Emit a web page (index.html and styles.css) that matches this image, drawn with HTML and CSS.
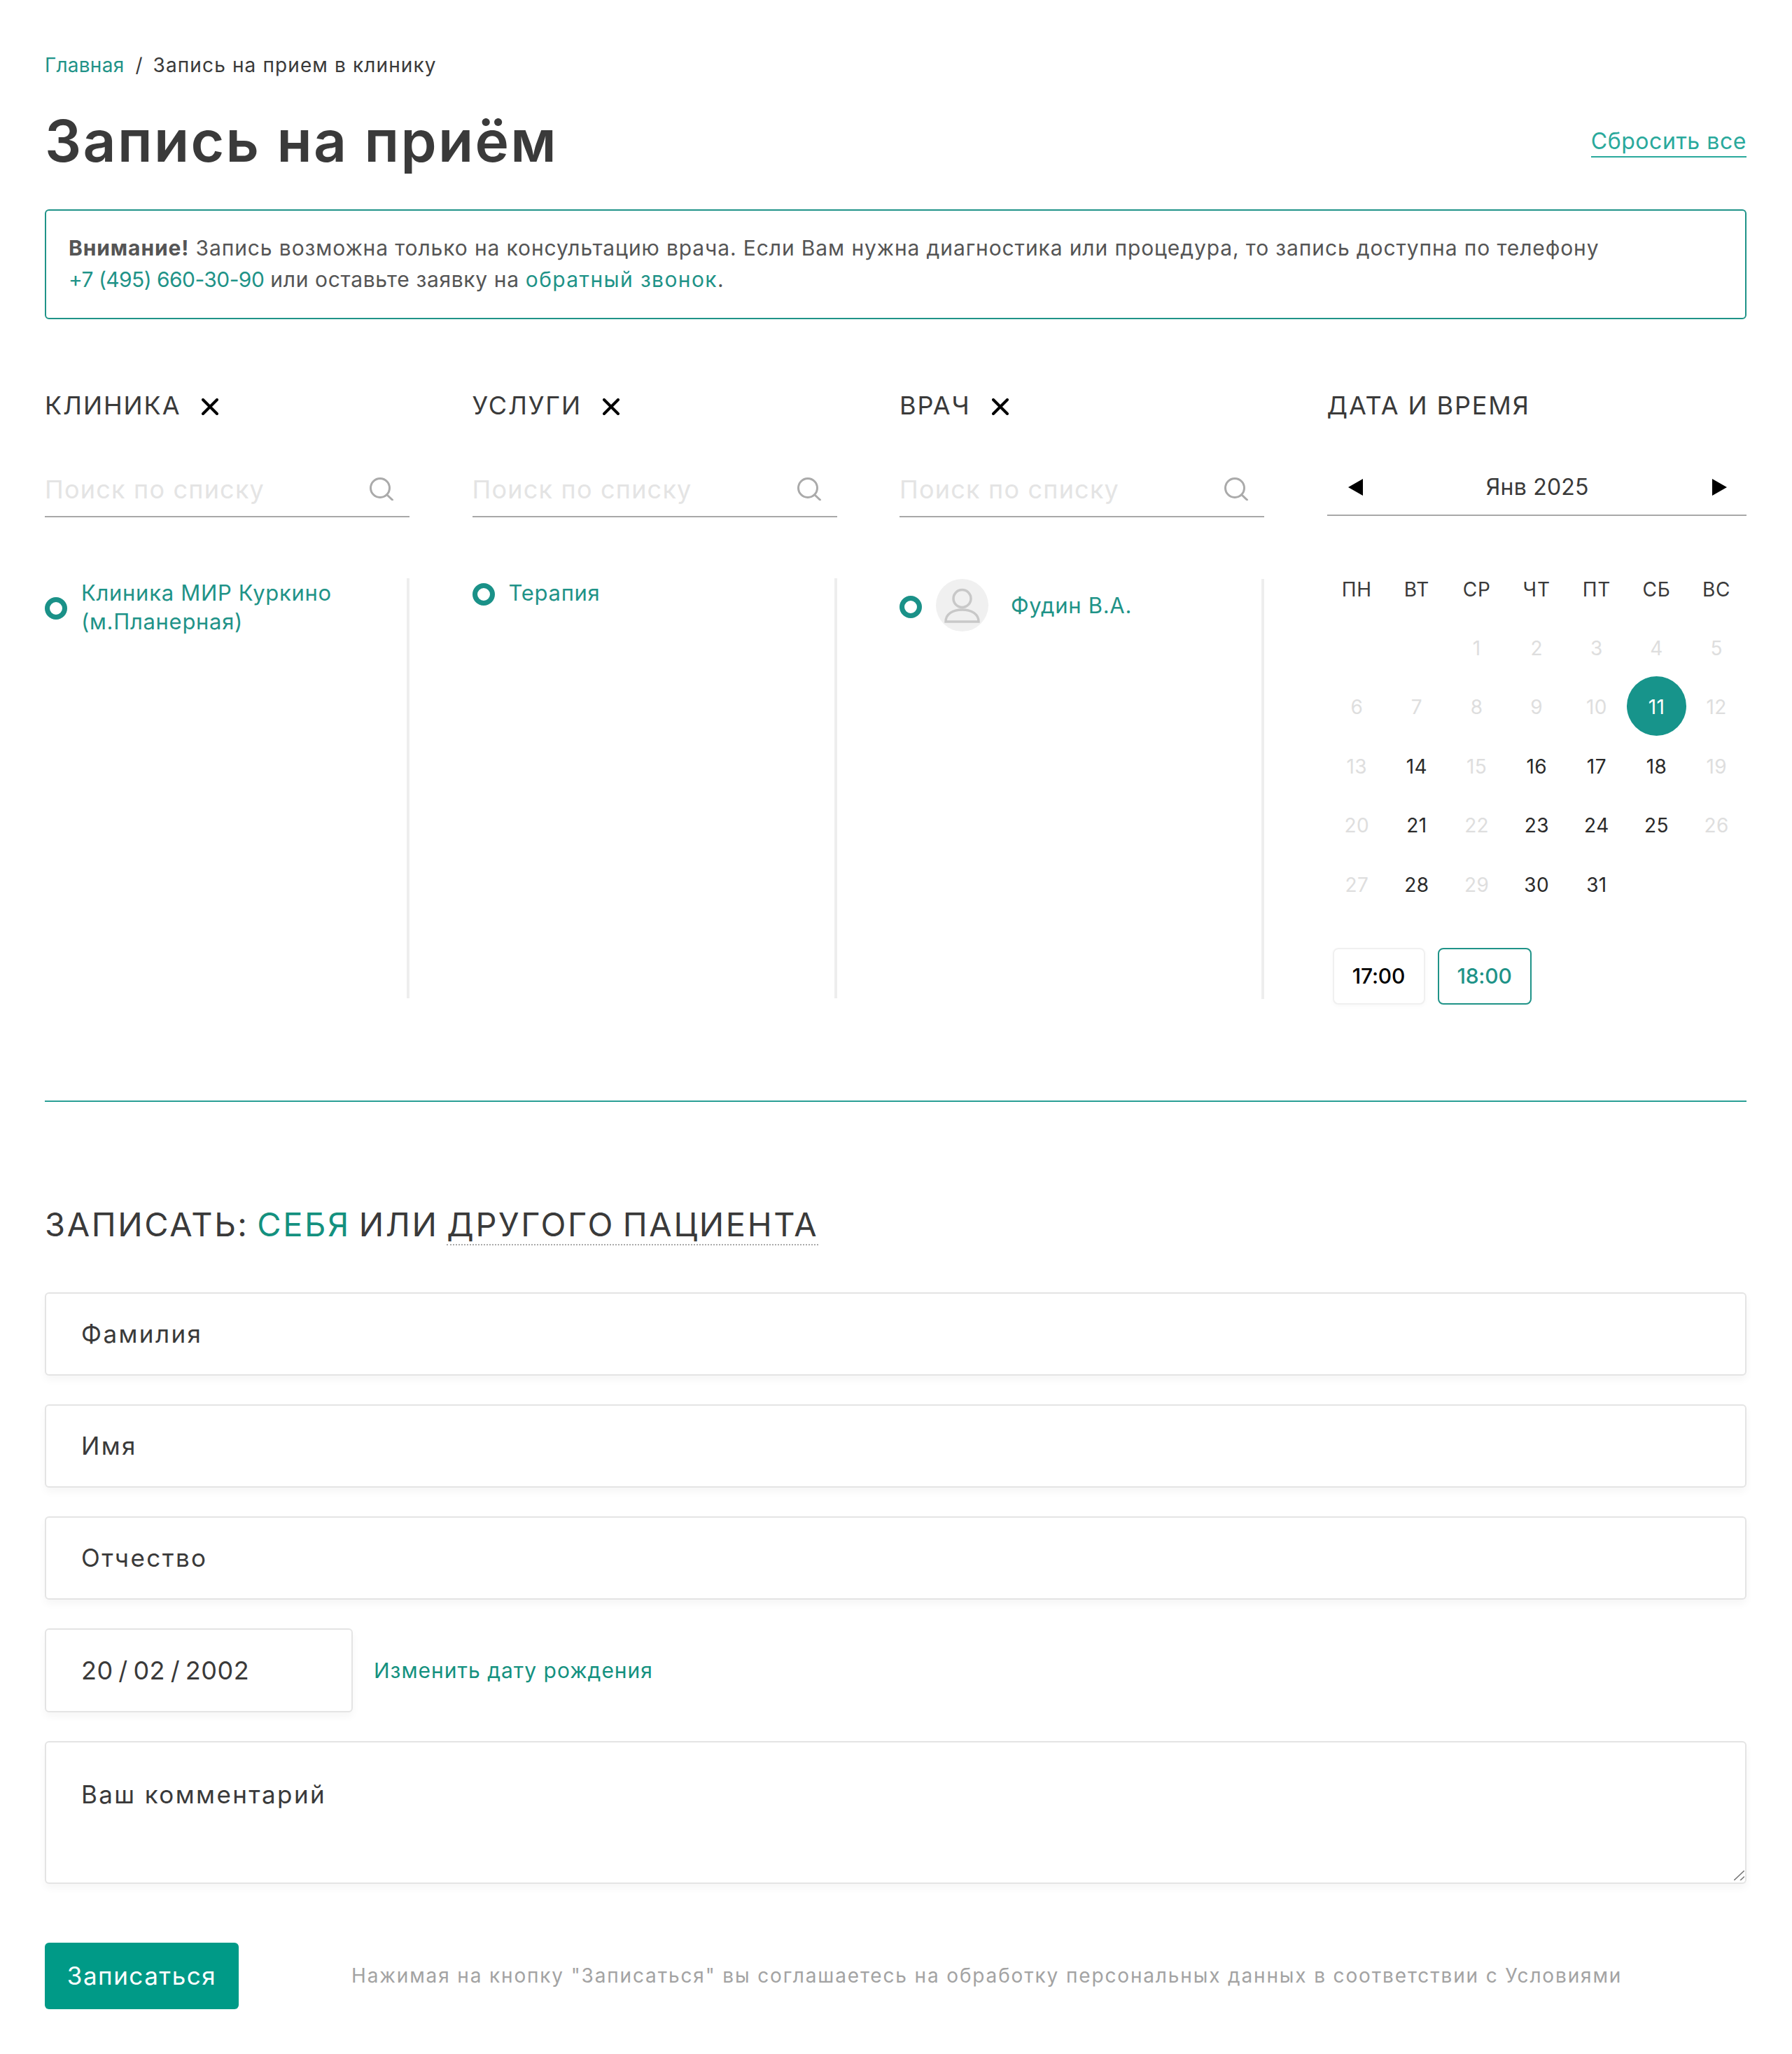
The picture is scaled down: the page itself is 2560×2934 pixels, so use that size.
FILE: index.html
```html
<!DOCTYPE html>
<html lang="ru">
<head>
<meta charset="utf-8">
<title>Запись на приём</title>
<link rel="stylesheet" href="styles.css">
</head>
<body>
<main class="page">
  <nav class="crumbs"><a class="crumb-link">Главная</a><span class="crumb-sep">/</span><span class="crumb-cur">Запись на прием в клинику</span></nav>
  <header class="head">
    <h1 class="title">Запись на приём</h1>
    <a class="reset">Сбросить все</a>
  </header>
  <section class="alert"><b>Внимание!</b> Запись возможна только на консультацию врача. Если Вам нужна диагностика или процедура, то запись доступна по телефону<br><span class="line2"><a class="teal phone">+7 (495) 660-30-90</a> или оставьте заявку на <a class="teal callback">обратный звонок</a>.</span></section>

  <section class="columns">
    <div class="col">
      <div class="col-title"><span>КЛИНИКА</span><svg class="close" viewBox="0 0 24 24"><path d="M2 2 22 22M22 2 2 22"/></svg></div>
      <div class="search"><span class="ph">Поиск по списку</span><svg class="glass" viewBox="0 0 36 34"><circle cx="16" cy="16" r="13.500"/><path d="M26 26 33.500 33"/></svg></div>
      <div class="list">
        <div class="item"><i class="radio"></i><span class="item-text">Клиника МИР Куркино<br>(м.Планерная)</span></div>
      </div>
    </div>
    <div class="col">
      <div class="col-title"><span>УСЛУГИ</span><svg class="close" viewBox="0 0 24 24"><path d="M2 2 22 22M22 2 2 22"/></svg></div>
      <div class="search"><span class="ph">Поиск по списку</span><svg class="glass" viewBox="0 0 36 34"><circle cx="16" cy="16" r="13.500"/><path d="M26 26 33.500 33"/></svg></div>
      <div class="list">
        <div class="item"><i class="radio"></i><span class="item-text">Терапия</span></div>
      </div>
    </div>
    <div class="col">
      <div class="col-title"><span>ВРАЧ</span><svg class="close" viewBox="0 0 24 24"><path d="M2 2 22 22M22 2 2 22"/></svg></div>
      <div class="search"><span class="ph">Поиск по списку</span><svg class="glass" viewBox="0 0 36 34"><circle cx="16" cy="16" r="13.500"/><path d="M26 26 33.500 33"/></svg></div>
      <div class="list">
        <div class="item item-doc"><i class="radio"></i>
          <span class="avatar"><svg viewBox="0 0 75 75"><circle cx="37.500" cy="28" r="12.500"/><path d="M14 61c0-11 10-17 23.500-17S61 50 61 61Z"/></svg></span>
          <span class="item-text">Фудин В.А.</span></div>
      </div>
    </div>
    <div class="col col-cal">
      <div class="col-title"><span>ДАТА И ВРЕМЯ</span></div>
      <div class="month"><svg class="arrow" viewBox="0 0 21 24"><path d="M21 0V24L0 12Z"/></svg><span>Янв 2025</span><svg class="arrow" viewBox="0 0 21 24"><path d="M0 0V24L21 12Z"/></svg></div>
      <div class="weekdays"><span>ПН</span><span>ВТ</span><span>СР</span><span>ЧТ</span><span>ПТ</span><span>СБ</span><span>ВС</span></div>
      <div class="days">
        <span></span><span></span><span class="off">1</span><span class="off">2</span><span class="off">3</span><span class="off">4</span><span class="off">5</span>
        <span class="off">6</span><span class="off">7</span><span class="off">8</span><span class="off">9</span><span class="off">10</span><span class="sel"><b>11</b></span><span class="off">12</span>
        <span class="off">13</span><span>14</span><span class="off">15</span><span>16</span><span>17</span><span>18</span><span class="off">19</span>
        <span class="off">20</span><span>21</span><span class="off">22</span><span>23</span><span>24</span><span>25</span><span class="off">26</span>
        <span class="off">27</span><span>28</span><span class="off">29</span><span>30</span><span>31</span><span></span><span></span>
      </div>
      <div class="times"><span class="time">17:00</span><span class="time time-on">18:00</span></div>
    </div>
  </section>

  <hr class="rule">

  <h2 class="who">ЗАПИСАТЬ: <a class="teal-strong">СЕБЯ</a> ИЛИ <a class="other">ДРУГОГО ПАЦИЕНТА</a></h2>
  <form class="form">
    <div class="field">Фамилия</div>
    <div class="field">Имя</div>
    <div class="field">Отчество</div>
    <div class="birth"><div class="field field-date">20 / 02 / 2002</div><a class="change">Изменить дату рождения</a></div>
    <div class="comment-wrap">
      <textarea class="field comment">Ваш комментарий</textarea>
      <svg class="grip" viewBox="0 0 15 14"><path d="M0 14 15 0M9 14 15 8.500"/></svg>
    </div>
  </form>
  <footer class="submit"><a class="btn">Записаться</a><span class="note">Нажимая на кнопку "Записаться" вы соглашаетесь на обработку персональных данных в соответствии с Условиями</span></footer>
</main>
</body>
</html>
```
FILE: styles.css
```css
* { box-sizing: border-box; }
html, body { margin: 0; background: #fff; }
body { font-family: Inter, "Noto Sans", "Liberation Sans", sans-serif; color: #3a3a3a; }
a { color: inherit; text-decoration: none; }
.page { padding: 73px 65px 50px 64px; }

.crumbs { display: flex; line-height: 40px; font-size: 28px; }
.crumb-link { color: #1f9388; letter-spacing: .25px; }
.crumb-sep { margin: 0 15px 0 16px; }
.crumb-cur { letter-spacing: 1.12px; }

.head { display: flex; justify-content: space-between; align-items: center; margin-top: 39px; height: 100px; }
.title { margin: 0; font-size: 82px; font-weight: 600; line-height: 100px; letter-spacing: 2.35px; color: #3a3a3a; }
.reset { margin-top: 2px; font-size: 32px; line-height: 42px; letter-spacing: .55px; color: #2aa99c; border-bottom: 2px solid #2aa99c; }

.alert { margin-top: 47px; height: 157px; padding: 31px 32px; border: 2px solid #1f9388; border-radius: 6px; font-size: 30px; line-height: 45px; letter-spacing: .88px; color: #555; }
.alert b { font-weight: 700; }
.line2 { letter-spacing: .65px; }
.teal { color: #1f9388; }
.phone { letter-spacing: -.57px; }
.callback { letter-spacing: 1.38px; }

.columns { display: grid; grid-template-columns: 521px 521px 521px 1fr; column-gap: 89.5px; margin-top: 103px; }
.col-title { display: flex; align-items: center; height: 40px; font-size: 36px; line-height: 40px; letter-spacing: 1.9px; color: #3a3a3a; }
.close { width: 24px; height: 24px; margin: 4px 0 0 30px; fill: none; stroke: #000; stroke-width: 4; stroke-linecap: round; }

.search { display: flex; justify-content: space-between; align-items: center; margin-top: 70px; height: 70px; padding-bottom: 8px; border-bottom: 2px solid #a8a8a8; }
.ph { font-size: 36px; letter-spacing: 1.2px; color: #e4e4e4; }
.glass { width: 36px; height: 34px; margin: 0 22px 2px 0; fill: none; stroke: #aaa; stroke-width: 3; stroke-linecap: round; }

.list { margin-top: 88px; height: 600px; border-right: 4px solid #eee; }
.item { display: flex; align-items: center; margin-top: -1px; color: #1f9388; }
.item-text { font-size: 31px; line-height: 41px; letter-spacing: .7px; }
.radio { flex: none; width: 32px; height: 32px; margin: 4px 20px 0 0; border: 7px solid #1a9188; border-radius: 50%; }
.item-doc { margin-top: 1px; }
.avatar { flex: none; width: 75px; height: 75px; margin-right: 32px; border-radius: 50%; background: #f0f0f0; }
.avatar svg { display: block; fill: none; stroke: #c8c8c8; stroke-width: 3.5; }

.month { display: flex; justify-content: space-between; align-items: center; margin-top: 66px; height: 72px; padding: 0 28px 9px 30px; border-bottom: 2px solid #a8a8a8; font-size: 32px; letter-spacing: .2px; }
.arrow { width: 21px; height: 24px; fill: #000; }

.weekdays, .days { display: grid; grid-template-columns: repeat(7, 1fr); text-align: center; }
.weekdays { margin-top: 85px; height: 40px; line-height: 40px; font-size: 28px; letter-spacing: .8px; }
.days { margin-top: 22px; grid-auto-rows: 84.4px; font-size: 28px; line-height: 84.4px; letter-spacing: .4px; color: #2a2a2a; }
.days .off { color: #dedede; }
.sel { display: flex; align-items: center; justify-content: center; }
.sel b { display: block; width: 85px; height: 85px; margin-top: -4px; line-height: 89px; border-radius: 50%; background: #17948b; color: #fff; font-weight: 400; }

.times { display: flex; gap: 18px; margin: 48px 0 0 8px; }
.time { display: block; width: 132px; height: 81px; line-height: 77px; text-align: center; font-size: 30px; font-weight: 500; letter-spacing: -.2px; color: #000; border: 2px solid #f0f0f0; border-radius: 8px; box-shadow: 0 2px 6px rgba(0,0,0,.03); }
.time-on { width: 134px; color: #1f9388; border-color: #1f9388; box-shadow: none; }

.rule { margin: 137px 0 0; height: 2px; border: 0; background: #2a9f95; }

.who { margin: 145px 0 0; font-size: 47px; font-weight: 400; line-height: 60px; letter-spacing: 2.6px; word-spacing: -4px; color: #3a3a3a; }
.teal-strong { color: #14917f; }
.other { border-bottom: 2px dotted #aaa; }

.form { display: flex; flex-direction: column; gap: 41px; margin-top: 67px; }
.field { height: 119px; padding: 0 50px; border: 2px solid #e4e4e4; border-radius: 6px; background: #fff; box-shadow: 0 6px 12px rgba(0,0,0,.04); font-size: 35px; line-height: 115px; letter-spacing: 2.4px; color: #3a3a3a; }
.birth { display: flex; align-items: center; gap: 30px; }
.field-date { width: 440px; height: 120px; line-height: 116px; font-size: 36px; letter-spacing: .5px; word-spacing: -3px; }
.change { font-size: 30px; letter-spacing: 1px; color: #14917f; }
.comment-wrap { position: relative; height: 204px; }
.comment { display: block; width: 100%; height: 204px; padding: 52px 50px 0; line-height: 44px; font-family: inherit; resize: none; outline: none; }
.grip { position: absolute; right: 3px; bottom: 5px; width: 15px; height: 14px; fill: none; stroke: #777; stroke-width: 1.6; }

.submit { display: flex; align-items: center; margin-top: 84px; }
.btn { display: block; width: 277px; height: 95px; line-height: 95px; text-align: center; border-radius: 6px; background: #009a87; color: #fff; font-size: 35px; letter-spacing: 1.5px; }
.note { margin-left: 161px; font-size: 28px; letter-spacing: 1.85px; color: #a3a3a3; }
```
